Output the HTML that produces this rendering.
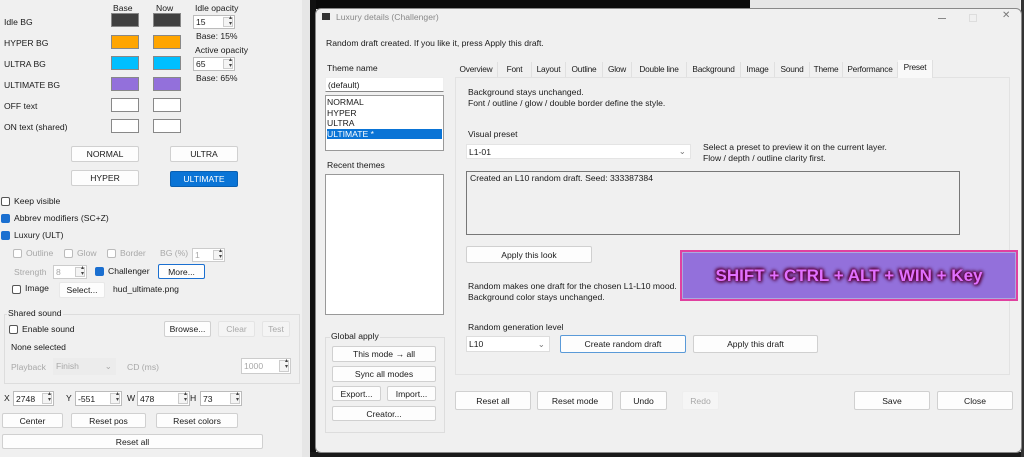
<!DOCTYPE html><html><head><style>
*{box-sizing:border-box;margin:0;padding:0}
body{width:1024px;height:457px;overflow:hidden;position:relative;background:#f0f0f0;font-family:"Segoe UI","Liberation Sans",sans-serif;font-size:8.6px;color:#1a1a1a}
.a{position:absolute;white-space:nowrap}
.sw{position:absolute;width:28px;height:14px;border:1px solid #888}
.b{position:absolute;background:#fdfdfd;border:1px solid #d0d0d0;border-radius:2px;text-align:center;display:flex;align-items:center;justify-content:center}
.tb{position:absolute;background:#fff;border:1px solid #bbb;padding-left:2px;display:flex;align-items:center}
.cb{position:absolute;width:9px;height:9px;border:1px solid #555;border-radius:2px;background:#fff}
.ck{background:#1a6fd0;border-color:#1a6fd0}
.dis{color:#a8a8a8}
.dis.cb{border-color:#bbb}
.sp::after{content:"";position:absolute;right:1px;top:1px;bottom:1px;width:8px;border:1px solid #ccc;background:linear-gradient(#f4f4f4,#f4f4f4)}
.sp::before{content:"▴\A▾";white-space:pre;position:absolute;right:2px;top:0;font-size:6px;line-height:5.5px;color:#444;z-index:1}
.tab{position:absolute;top:62px;height:15px;border-right:1px solid #e0e0e0;text-align:center;line-height:15px;background:#f0f0f0;font-size:8.3px;letter-spacing:-0.2px}
</style></head><body>
<div class="a" style="left:0;top:0;width:302px;height:457px;background:#f0f0f0"></div>
<div class="a" style="left:302px;top:0;width:10px;height:457px;background:#e6e6e6"></div>
<div class="a" style="left:113px;top:3px">Base</div><div class="a" style="left:156px;top:3px">Now</div>
<div class="a" style="left:4px;top:17px">Idle BG</div>
<div class="a" style="left:4px;top:38px">HYPER BG</div>
<div class="a" style="left:4px;top:59px">ULTRA BG</div>
<div class="a" style="left:4px;top:80px">ULTIMATE BG</div>
<div class="a" style="left:4px;top:101px">OFF text</div>
<div class="a" style="left:4px;top:122px">ON text (shared)</div>
<div class="sw" style="left:111px;top:13px;background:#404040"></div><div class="sw" style="left:153px;top:13px;background:#404040"></div>
<div class="sw" style="left:111px;top:35px;background:#ffa500"></div><div class="sw" style="left:153px;top:35px;background:#ffa500"></div>
<div class="sw" style="left:111px;top:56px;background:#00bfff"></div><div class="sw" style="left:153px;top:56px;background:#00bfff"></div>
<div class="sw" style="left:111px;top:77px;background:#9370db"></div><div class="sw" style="left:153px;top:77px;background:#9370db"></div>
<div class="sw" style="left:111px;top:98px;background:#fff"></div><div class="sw" style="left:153px;top:98px;background:#fff"></div>
<div class="sw" style="left:111px;top:119px;background:#fff"></div><div class="sw" style="left:153px;top:119px;background:#fff"></div>
<div class="a" style="left:195px;top:3px">Idle opacity</div>
<div class="tb sp" style="left:193px;top:15px;width:42px;height:14px">15</div>
<div class="a" style="left:196px;top:31px">Base: 15%</div>
<div class="a" style="left:195px;top:45px">Active opacity</div>
<div class="tb sp" style="left:193px;top:57px;width:42px;height:14px">65</div>
<div class="a" style="left:196px;top:73px">Base: 65%</div>
<div class="b" style="left:71px;top:146px;width:68px;height:16px">NORMAL</div>
<div class="b" style="left:170px;top:146px;width:68px;height:16px">ULTRA</div>
<div class="b" style="left:71px;top:170px;width:68px;height:16px">HYPER</div>
<div class="b" style="left:170px;top:171px;width:68px;height:16px;background:#0a74d6;color:#fff;border-color:#0a5fb0">ULTIMATE</div>
<div class="cb" style="left:1px;top:197px"></div><div class="a" style="left:14px;top:196px">Keep visible</div>
<div class="cb ck" style="left:1px;top:214px"></div><div class="a" style="left:14px;top:213px">Abbrev modifiers (SC+Z)</div>
<div class="cb ck" style="left:1px;top:231px"></div><div class="a" style="left:14px;top:230px">Luxury (ULT)</div>
<div class="cb dis" style="left:13px;top:249px"></div><div class="a dis" style="left:26px;top:248px">Outline</div>
<div class="cb dis" style="left:64px;top:249px"></div><div class="a dis" style="left:77px;top:248px">Glow</div>
<div class="cb dis" style="left:107px;top:249px"></div><div class="a dis" style="left:120px;top:248px">Border</div>
<div class="a dis" style="left:160px;top:248px">BG (%)</div>
<div class="tb sp dis" style="left:192px;top:248px;width:33px;height:14px;border-color:#ccc">1</div>
<div class="a dis" style="left:14px;top:267px">Strength</div>
<div class="tb sp dis" style="left:53px;top:265px;width:34px;height:14px;border-color:#ccc">8</div>
<div class="cb ck" style="left:95px;top:267px"></div><div class="a" style="left:108px;top:266px">Challenger</div>
<div class="b" style="left:158px;top:264px;width:47px;height:15px;border-color:#1a6fd0">More...</div>
<div class="cb" style="left:12px;top:285px"></div><div class="a" style="left:25px;top:283px">Image</div>
<div class="b" style="left:59px;top:282px;width:46px;height:16px;border-color:#e8e8e8">Select...</div>
<div class="a" style="left:113px;top:284px">hud_ultimate.png</div>
<div class="a" style="left:4px;top:314px;width:296px;height:70px;border:1px solid #ddd"></div>
<div class="a" style="left:7px;top:308px;background:#f0f0f0;padding:0 1px">Shared sound</div>
<div class="cb" style="left:9px;top:325px"></div><div class="a" style="left:22px;top:324px">Enable sound</div>
<div class="b" style="left:164px;top:321px;width:47px;height:16px">Browse...</div>
<div class="b dis" style="left:218px;top:321px;width:37px;height:16px;background:#f4f4f4;border-color:#e4e4e4">Clear</div>
<div class="b dis" style="left:262px;top:321px;width:28px;height:16px;background:#f4f4f4;border-color:#e4e4e4">Test</div>
<div class="a" style="left:11px;top:342px">None selected</div>
<div class="a dis" style="left:11px;top:362px">Playback</div>
<div class="a dis" style="left:53px;top:358px;width:63px;height:17px;background:#ececec;padding:3px">Finish<span style="position:absolute;right:4px">⌄</span></div>
<div class="a dis" style="left:127px;top:362px">CD (ms)</div>
<div class="tb sp dis" style="left:241px;top:358px;width:50px;height:16px;border-color:#ccc">1000</div>
<div class="a" style="left:4px;top:393px">X</div><div class="tb sp" style="left:13px;top:391px;width:41px;height:15px">2748</div>
<div class="a" style="left:66px;top:393px">Y</div><div class="tb sp" style="left:75px;top:391px;width:47px;height:15px">-551</div>
<div class="a" style="left:127px;top:393px">W</div><div class="tb sp" style="left:137px;top:391px;width:53px;height:15px">478</div>
<div class="a" style="left:190px;top:393px">H</div><div class="tb sp" style="left:200px;top:391px;width:42px;height:15px">73</div>
<div class="b" style="left:2px;top:413px;width:61px;height:15px">Center</div>
<div class="b" style="left:71px;top:413px;width:75px;height:15px">Reset pos</div>
<div class="b" style="left:156px;top:413px;width:82px;height:15px">Reset colors</div>
<div class="b" style="left:2px;top:434px;width:261px;height:15px">Reset all</div>
<div class="a" style="left:310px;top:0;width:440px;height:9px;background:#0a0a0a"></div>
<div class="a" style="left:750px;top:0;width:270px;height:9px;background:#e6e6e6"></div>
<div class="a" style="left:310px;top:0;width:6px;height:457px;background:#111"></div>
<div class="a" style="left:310px;top:452px;width:714px;height:5px;background:#1a1a1a"></div>
<div class="a" style="left:1021px;top:0;width:3px;height:457px;background:#333"></div>
<div class="a" style="left:315px;top:8px;width:707px;height:445px;background:#f0f0f0;border:1px solid #888;border-radius:6px"></div>
<div class="a" style="left:322px;top:13px;width:8px;height:7px;background:#333"></div>
<div class="a" style="left:336px;top:12px;color:#888">Luxury details (Challenger)</div>
<div class="a" style="left:938px;top:18px;width:8px;height:1px;background:#888"></div>
<div class="a" style="left:969px;top:14px;width:8px;height:8px;border:1px solid #ddd"></div>
<div class="a" style="left:1002px;top:10px;font-size:10px;color:#777">✕</div>
<div class="a" style="left:326px;top:38px">Random draft created. If you like it, press Apply this draft.</div>
<div class="a" style="left:327px;top:63px">Theme name</div>
<div class="tb" style="left:325px;top:77px;width:119px;height:15px;border-color:#eee;border-bottom-color:#888">(default)</div>
<div class="a" style="left:325px;top:95px;width:119px;height:56px;background:#fff;border:1px solid #999;line-height:10.5px;padding:1px">NORMAL<br>HYPER<br>ULTRA<br><div style="background:#0a74d6;color:#fff">ULTIMATE *</div></div>
<div class="a" style="left:327px;top:160px">Recent themes</div>
<div class="a" style="left:325px;top:174px;width:119px;height:141px;background:#fff;border:1px solid #999"></div>
<div class="a" style="left:325px;top:337px;width:120px;height:96px;border:1px solid #ddd"></div>
<div class="a" style="left:330px;top:331px;background:#f0f0f0;padding:0 1px">Global apply</div>
<div class="b" style="left:332px;top:346px;width:104px;height:16px">This mode → all</div>
<div class="b" style="left:332px;top:366px;width:104px;height:16px">Sync all modes</div>
<div class="b" style="left:332px;top:386px;width:49px;height:15px">Export...</div>
<div class="b" style="left:387px;top:386px;width:49px;height:15px">Import...</div>
<div class="b" style="left:332px;top:406px;width:104px;height:15px">Creator...</div>
<div class="a" style="left:455px;top:77px;width:555px;height:298px;border:1px solid #e2e2e2;background:#f0f0f0"></div>
<div class="tab" style="left:455px;width:43px">Overview</div>
<div class="tab" style="left:498px;width:34px">Font</div>
<div class="tab" style="left:532px;width:34px">Layout</div>
<div class="tab" style="left:566px;width:37px">Outline</div>
<div class="tab" style="left:603px;width:29px">Glow</div>
<div class="tab" style="left:632px;width:55px">Double line</div>
<div class="tab" style="left:687px;width:54px">Background</div>
<div class="tab" style="left:741px;width:34px">Image</div>
<div class="tab" style="left:775px;width:35px">Sound</div>
<div class="tab" style="left:810px;width:33px">Theme</div>
<div class="tab" style="left:843px;width:55px">Performance</div>
<div class="tab" style="left:898px;width:35px;top:60px;height:18px;background:#f9f9f9;line-height:15px">Preset</div>
<div class="a" style="left:468px;top:87px;line-height:10.5px">Background stays unchanged.<br>Font / outline / glow / double border define the style.</div>
<div class="a" style="left:468px;top:129px">Visual preset</div>
<div class="tb" style="left:466px;top:144px;width:225px;height:15px;border-color:#e4e4e4">L1-01<span style="position:absolute;right:4px;color:#777">⌄</span></div>
<div class="a" style="left:703px;top:142px;line-height:10.5px">Select a preset to preview it on the current layer.<br>Flow / depth / outline clarity first.</div>
<div class="a" style="left:466px;top:171px;width:494px;height:64px;border:1px solid #777;padding:1px 3px">Created an L10 random draft. Seed: 333387384</div>
<div class="b" style="left:466px;top:246px;width:126px;height:17px">Apply this look</div>
<div class="a" style="left:680px;top:250px;width:338px;height:51px;border:2px solid #e040a0;background:#9370db;box-shadow:inset 0 0 0 1px #aad;display:flex;align-items:center;justify-content:center;font-size:17px;font-weight:bold;color:#e070ff;text-shadow:0 0 3px #600040,0 0 4px #600040,1px 1px 3px #500035,-1px -1px 3px #500035">SHIFT + CTRL + ALT + WIN + Key</div>
<div class="a" style="left:468px;top:281px;line-height:10.5px">Random makes one draft for the chosen L1-L10 mood.<br>Background color stays unchanged.</div>
<div class="a" style="left:468px;top:322px">Random generation level</div>
<div class="tb" style="left:466px;top:336px;width:84px;height:16px;border-color:#ddd">L10<span style="position:absolute;right:4px;color:#777">⌄</span></div>
<div class="b" style="left:560px;top:335px;width:126px;height:18px;border-color:#5a9ad8">Create random draft</div>
<div class="b" style="left:693px;top:335px;width:125px;height:18px">Apply this draft</div>
<div class="b" style="left:455px;top:391px;width:76px;height:19px">Reset all</div>
<div class="b" style="left:537px;top:391px;width:76px;height:19px">Reset mode</div>
<div class="b" style="left:620px;top:391px;width:47px;height:19px">Undo</div>
<div class="b dis" style="left:682px;top:391px;width:37px;height:19px;background:#f5f5f5;border-color:#eee">Redo</div>
<div class="b" style="left:854px;top:391px;width:76px;height:19px">Save</div>
<div class="b" style="left:937px;top:391px;width:76px;height:19px">Close</div>
</body></html>
